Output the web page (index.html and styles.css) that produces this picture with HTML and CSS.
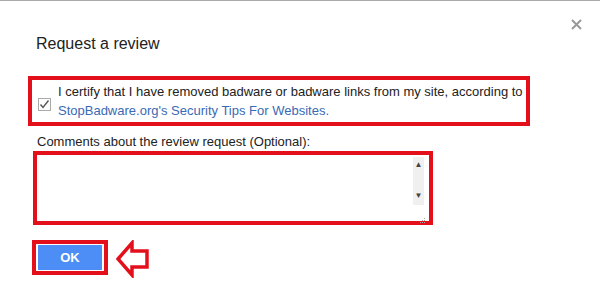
FILE: index.html
```html
<!DOCTYPE html>
<html lang="en">

<head>
    <meta charset="UTF-8">
    <title>Request a review</title>
    <link rel="stylesheet" href="styles.css">
</head>

<body>
    <div class="dialog">
        <svg class="fechar" width="11" height="11" viewBox="0 0 11 11">
            <path d="M1 1 L10 10 M10 1 L1 10" stroke="#999" stroke-width="2" />
        </svg>
        <h1>Request a review</h1>

        <div class="destaque caixaCertifica">
            <span class="check">
                <svg width="13" height="13" viewBox="0 0 13 13">
                    <rect x="0.5" y="0.5" width="12" height="12" fill="#fff" stroke="#aaa" />
                    <path d="M2.5 6.5 L5 9.5 L10.5 2.5" fill="none" stroke="#555" stroke-width="1.4" />
                </svg>
            </span>
            <p>I certify that I have removed badware or badware links from my site, according to<br>
                <a href="#">StopBadware.org's Security Tips For Websites.</a></p>
        </div>

        <label class="rotulo" for="iComentarios">Comments about the review request (Optional):</label>
        <div class="destaque caixaComentario">
            <div class="campo">
                <div class="areaTexto" id="iComentarios"></div>
                <div class="rolagem">
                    <span class="seta">&#x25B2;</span>
                    <span class="seta">&#x25BC;</span>
                </div>
            </div>
            <span class="grip">
                <svg width="7" height="7" viewBox="0 0 7 7" fill="#aaa">
                    <rect x="5" y="1" width="1" height="1" />
                    <rect x="3" y="3" width="1" height="1" />
                    <rect x="5" y="3" width="1" height="1" />
                    <rect x="1" y="5" width="1" height="1" />
                    <rect x="3" y="5" width="1" height="1" />
                    <rect x="5" y="5" width="1" height="1" />
                </svg>
            </span>
        </div>

        <div class="acoes">
            <div class="destaque caixaBotao">
                <button type="button">OK</button>
            </div>
            <svg class="seta-vermelha" width="34" height="38" viewBox="0 0 34 38">
                <path d="M2 19 L16 3 L16 11 L31 11 L31 27 L16 27 L16 35 Z" fill="#fff" stroke="#e3101c"
                    stroke-width="3.5" stroke-linejoin="miter" />
            </svg>
        </div>
    </div>
</body>

</html>
```

FILE: styles.css
```css
* {
    margin: 0;
    padding: 0;
    box-sizing: border-box;
    font-family: Arial, "Liberation Sans", Helvetica, sans-serif;
}

body {
    background-color: white;
    width: 600px;
    height: 301px;
    overflow: hidden;
}

.dialog {
    position: relative;
    border-top: 1px solid #a9a9a9;
    height: 301px;
    padding: 33px 0 0 28px;
}

.fechar {
    position: absolute;
    top: 18px;
    left: 571px;
}

h1 {
    font-size: 16px;
    font-weight: normal;
    color: #222;
    line-height: 19px;
    margin-left: 8px;
}

.destaque {
    border: 4px solid #e3101c;
}

.caixaCertifica {
    margin-top: 23px;
    width: 502px;
    height: 50px;
    display: flex;
    align-items: flex-start;
    padding: 2px 0 0 6px;
}

.check {
    margin-top: 15px;
    margin-right: 7px;
    height: 13px;
}

.caixaCertifica p {
    font-size: 13px;
    line-height: 19px;
    color: #222;
    white-space: nowrap;
}

.caixaCertifica a {
    color: #3a6ab5;
    text-decoration: none;
}

.rotulo {
    display: block;
    font-size: 13px;
    color: #222;
    line-height: 16px;
    margin: 8px 0 0 9px;
}

.caixaComentario {
    position: relative;
    margin: 1px 0 0 5px;
    width: 400px;
    height: 74px;
    padding: 2px;
}

.campo {
    display: flex;
    height: 48px;
}

.areaTexto {
    flex: 1;
}

.rolagem {
    width: 11px;
    margin-right: 3px;
    background-color: #f0f0f0;
    display: flex;
    flex-direction: column;
    justify-content: space-between;
    align-items: center;
    padding: 4px 0 5px;
}

.seta {
    font-size: 8px;
    color: #444;
    line-height: 8px;
}

.grip {
    position: absolute;
    right: 3px;
    bottom: 4px;
    height: 7px;
}

.acoes {
    display: flex;
    align-items: center;
    gap: 8px;
    margin: 12px 0 0 4px;
}

.caixaBotao {
    width: 76px;
    height: 35px;
    padding: 1px 2px;
}

.caixaBotao button {
    width: 100%;
    height: 100%;
    border: none;
    background-color: #4d8df6;
    color: white;
    font-size: 13px;
    font-weight: bold;
    cursor: pointer;
}

.seta-vermelha {
    margin-top: 3px;
}
```
